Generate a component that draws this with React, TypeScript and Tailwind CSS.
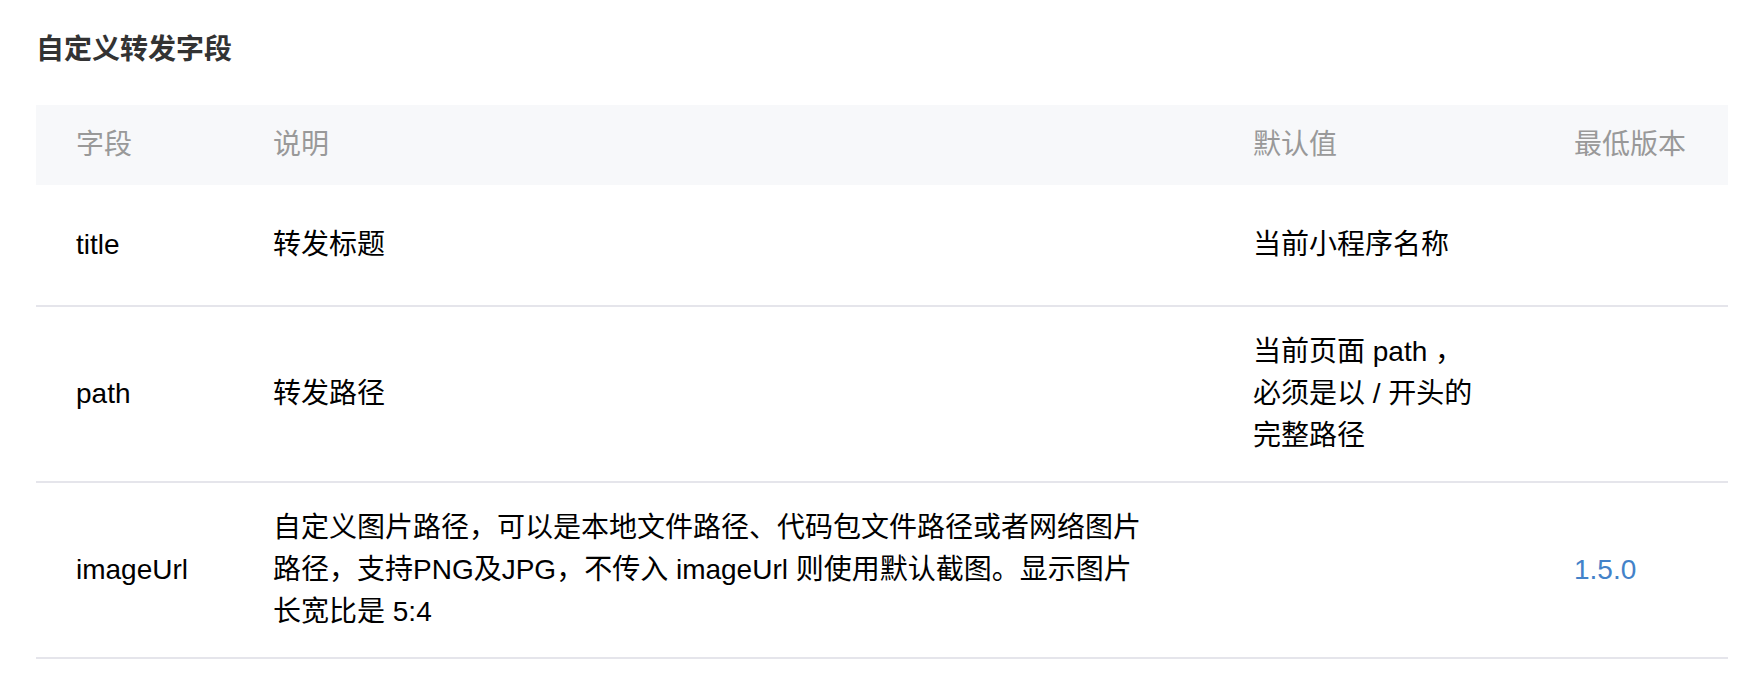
const font = "font-['Liberation_Sans','Noto_Sans_CJK_SC',sans-serif]";

type Row = {
  name: string;
  desc: React.ReactNode;
  def?: string;
  version?: string;
};

const rows: Row[] = [
  { name: "title", desc: "转发标题", def: "当前小程序名称" },
  { name: "path", desc: "转发路径", def: "当前页面 path ，必须是以 / 开头的完整路径" },
  {
    name: "imageUrl",
    desc: (
      <>
        自定义图片路径，可以是本地文件路径、代码包文件路径或者网络图片路径，支持PNG及JPG，不传入 imageUrl 则使用默认截图。显示图片
        <span className="whitespace-nowrap">长宽比是 5:4</span>
      </>
    ),
    version: "1.5.0",
  },
];

const cols = "grid grid-cols-[197px_980px_321px_1fr]";

export default function App() {
  return (
    <div className={`min-h-[688px] w-full bg-white px-[36px] pt-[29px] pr-[32px] ${font}`}>
      <h3 className="text-[28px] font-bold leading-[42px] text-[#333]">自定义转发字段</h3>

      <div className="mt-[34px] text-[28px] leading-[42px]">
        {/* 表头 */}
        <div className={`${cols} h-[80px] items-center bg-[#f7f8fa] text-[#999]`}>
          <div className="px-[40px]">字段</div>
          <div className="px-[40px]">说明</div>
          <div className="px-[40px]">默认值</div>
          <div className="px-[40px]">最低版本</div>
        </div>

        {rows.map((r) => (
          <div key={r.name} className={`${cols} min-h-[122px] items-center border-b-2 border-[#e5e5eb] py-[24px] text-black`}>
            <div className="px-[40px]">{r.name}</div>
            <div className="px-[40px]">
              <div className="max-w-[880px]">{r.desc}</div>
            </div>
            <div className="px-[40px]">
              <div className="w-[230px]">{r.def}</div>
            </div>
            <div className="px-[40px] text-[#4382c9]">{r.version}</div>
          </div>
        ))}
      </div>
    </div>
  );
}
